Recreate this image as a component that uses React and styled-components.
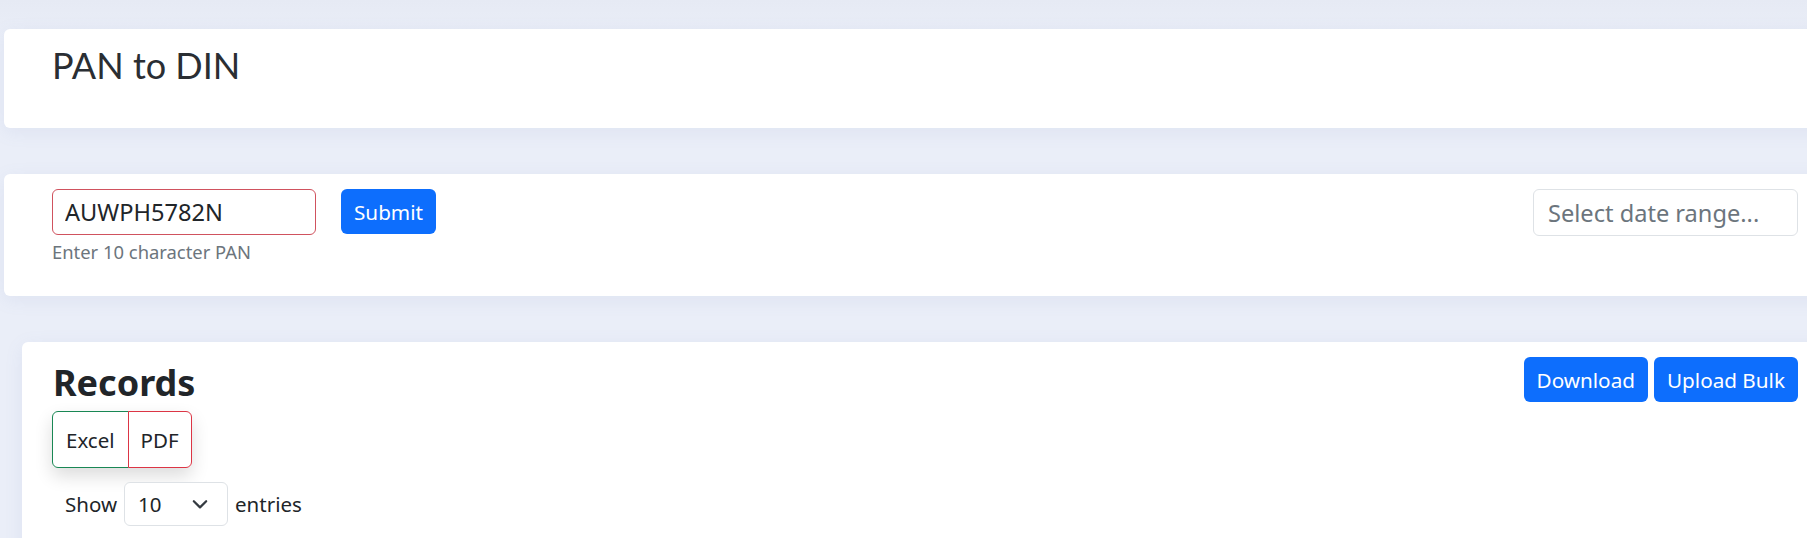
import React, { useState } from 'react';
import styled, { createGlobalStyle } from 'styled-components';

const GlobalStyle = createGlobalStyle`
  html, body {
    margin: 0;
    padding: 0;
    overflow: hidden;
  }
  body {
    background: linear-gradient(180deg, #e6eaf4 0, #eaeef8 40px, #eaeef8 100%);
    font-family: 'Noto Sans', 'Open Sans', sans-serif;
    color: #212529;
  }
`;

const App = () => {
  const [pan, setPan] = useState('AUWPH5782N');
  const [entries, setEntries] = useState('10');

  return (
    <Page>
      <GlobalStyle />
      <Card $height={99}>
        <Title>PAN to DIN</Title>
      </Card>

      <Card $height={122} $padTop={15}>
        <FormRow>
          <Field>
            <PanInput value={pan} onChange={(e) => setPan(e.target.value)} />
            <HelpText>Enter 10 character PAN</HelpText>
          </Field>
          <PrimaryButton>Submit</PrimaryButton>
          <Spacer />
          <DateInput placeholder="Select date range..." readOnly />
        </FormRow>
      </Card>

      <RecordsCard>
        <RecordsHeader>
          <div>
            <RecordsTitle>Records</RecordsTitle>
            <ExportGroup>
              <ExportButton $tone="#198754">Excel</ExportButton>
              <ExportButton $tone="#dc3545" $joined>PDF</ExportButton>
            </ExportGroup>
          </div>
          <ActionGroup>
            <PrimaryButton $wide>Download</PrimaryButton>
            <PrimaryButton $wide>Upload Bulk</PrimaryButton>
          </ActionGroup>
        </RecordsHeader>
        <LengthRow>
          Show
          <SelectWrap>
            <LengthSelect value={entries} onChange={(e) => setEntries(e.target.value)}>
              <option>10</option>
              <option>25</option>
              <option>50</option>
              <option>100</option>
            </LengthSelect>
            <Chevron viewBox="0 0 16 16">
              <path d="M2.5 5.5l5.5 5.5 5.5-5.5" />
            </Chevron>
          </SelectWrap>
          entries
        </LengthRow>
      </RecordsCard>
    </Page>
  );
};

const Page = styled.div`
  display: flex;
  flex-direction: column;
  gap: 46px;
  padding: 29px 0 0 4px;
  width: 1900px;
`;

const Card = styled.div`
  box-sizing: border-box;
  width: 1836px;
  height: ${(p) => p.$height}px;
  padding: ${(p) => p.$padTop || 0}px 42px 0 48px;
  background: #fff;
  border-radius: 6px;
  box-shadow: 0 4px 18px rgba(120, 140, 190, 0.1);
`;

const Title = styled.h1`
  margin: 0;
  padding-top: 14px;
  font-family: 'Lato', 'Noto Sans', sans-serif;
  font-weight: 400;
  font-size: 36px;
  line-height: 44px;
  color: #2a2e33;
`;

const FormRow = styled.div`
  display: flex;
  align-items: flex-start;
`;

const Field = styled.div`
  display: flex;
  flex-direction: column;
`;

const PanInput = styled.input`
  box-sizing: border-box;
  width: 264px;
  height: 46px;
  padding: 0 12px;
  border: 1px solid #d0525e;
  border-radius: 6px;
  font-family: 'Noto Sans', sans-serif;
  font-size: 23.6px;
  color: #212529;
  outline: none;
`;

const HelpText = styled.div`
  margin-top: 4px;
  font-size: 18.4px;
  line-height: 26px;
  color: #6c757d;
`;

const PrimaryButton = styled.button`
  box-sizing: border-box;
  height: 45px;
  margin-left: ${(p) => (p.$wide ? 0 : 25)}px;
  padding: 0 13px;
  border: none;
  border-radius: 6px;
  background: #0d6efd;
  color: #fff;
  font-family: 'Noto Sans', sans-serif;
  font-size: 20.7px;
  cursor: pointer;
`;

const Spacer = styled.div`
  flex: 1;
`;

const DateInput = styled.input`
  box-sizing: border-box;
  width: 265px;
  height: 47px;
  padding: 0 14px;
  border: 1px solid #dee2e6;
  border-radius: 6px;
  font-family: 'Noto Sans', sans-serif;
  font-size: 23.6px;
  outline: none;
  &::placeholder {
    color: #6c757d;
  }
`;

const RecordsCard = styled.div`
  box-sizing: border-box;
  width: 1818px;
  height: 260px;
  margin-left: 18px;
  padding: 15px 42px 0 30px;
  background: #fff;
  border-radius: 6px;
  box-shadow: 0 4px 18px rgba(120, 140, 190, 0.1);
`;

const RecordsHeader = styled.div`
  display: flex;
  justify-content: space-between;
  align-items: flex-start;
`;

const RecordsTitle = styled.h2`
  margin: 5px 0 7px 1px;
  font-size: 36px;
  font-weight: 700;
  line-height: 42px;
  color: #212529;
`;

const ActionGroup = styled.div`
  display: flex;
  gap: 6px;
`;

const ExportGroup = styled.div`
  display: inline-flex;
  border-radius: 6px;
  box-shadow: 0 8px 18px rgba(0, 0, 0, 0.14);
`;

const ExportButton = styled.button`
  box-sizing: border-box;
  height: 57px;
  padding: 0 ${(p) => (p.$joined ? 12 : 13)}px;
  margin-left: ${(p) => (p.$joined ? -1 : 0)}px;
  background: #fff;
  border: 1px solid ${(p) => p.$tone};
  border-radius: ${(p) => (p.$joined ? '0 6px 6px 0' : '6px 0 0 6px')};
  font-family: 'Noto Sans', sans-serif;
  font-size: 20.5px;
  color: #212529;
`;

const LengthRow = styled.div`
  display: flex;
  align-items: center;
  gap: 7px;
  margin-top: 14px;
  padding-left: 13px;
  font-size: 20.5px;
  color: #212529;
`;

const SelectWrap = styled.div`
  position: relative;
  display: flex;
`;

const LengthSelect = styled.select`
  appearance: none;
  box-sizing: border-box;
  width: 104px;
  height: 44px;
  padding: 0 13px;
  border: 1px solid #dee2e6;
  border-radius: 6px;
  background: #fff;
  font-family: 'Noto Sans', sans-serif;
  font-size: 20.5px;
  color: #212529;
`;

const Chevron = styled.svg`
  position: absolute;
  right: 19px;
  top: 13px;
  width: 18px;
  height: 18px;
  fill: none;
  stroke: #343a40;
  stroke-width: 2;
  stroke-linecap: round;
  stroke-linejoin: round;
  pointer-events: none;
`;

export default App;
